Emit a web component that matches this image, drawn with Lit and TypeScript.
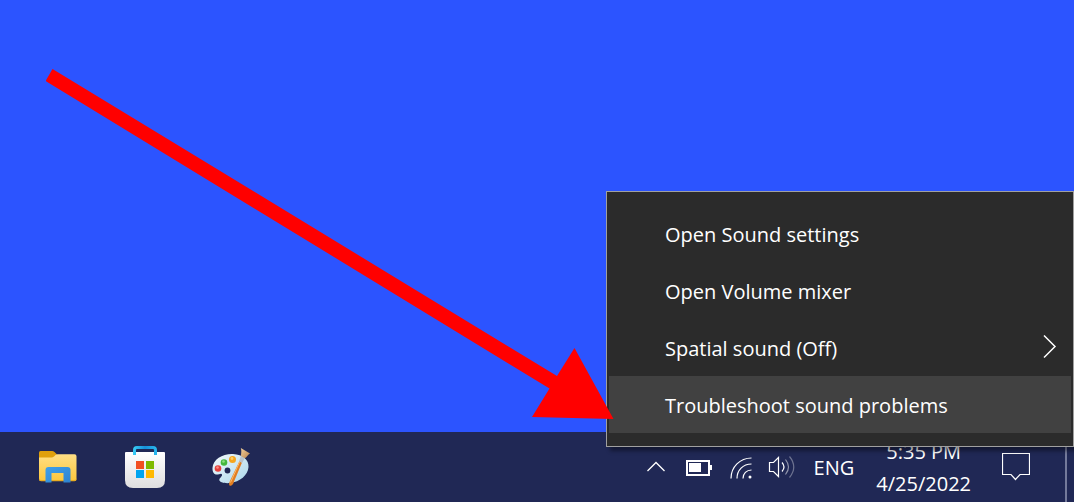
import { LitElement, html, css, svg } from "lit";
import { customElement, state } from "lit/decorators.js";
import { classMap } from "lit/directives/class-map.js";

interface MenuEntry {
  label: string;
  submenu?: boolean;
}

const ENTRIES: MenuEntry[] = [
  { label: "Open Sound settings" },
  { label: "Open Volume mixer" },
  { label: "Spatial sound (Off)", submenu: true },
  { label: "Troubleshoot sound problems" },
];

const explorerIcon = svg`
  <svg width="40" height="34" viewBox="1 0 40 34" aria-hidden="true">
    <defs>
      <linearGradient id="folder" x1="0" y1="0" x2="0" y2="1">
        <stop offset="0" stop-color="#ffdf85"/><stop offset="1" stop-color="#fcc73c"/>
      </linearGradient>
      <linearGradient id="stand" x1="0" y1="0" x2="1" y2="1">
        <stop offset="0" stop-color="#3ea0ea"/><stop offset="1" stop-color="#2f83cf"/>
      </linearGradient>
    </defs>
    <path d="M1 2.500Q1 1 2.500 1H14Q15.500 1 16.500 2L19 4.500V9H1Z" fill="#e0a00c"/>
    <path d="M1 7.500H13.500Q15 7.500 16 6.500L17.500 5Q18.300 4.300 19.500 4.300H36.500Q38.500 4.300 38.500 6.300V29Q38.500 31 36.500 31H3Q1 31 1 29Z" fill="url(#folder)"/>
    <path d="M1 28V29.500Q1 31.300 3 31.300H36.500Q38.500 31.300 38.500 29.500V28Q38.500 30 36.500 30H3Q1 30 1 28Z" fill="#e8ac22"/>
    <path d="M7.500 32.500V20Q7.500 17 10.500 17H29.500Q32.500 17 32.500 20V32.500H25.500V23H13.500V32.500Z" fill="url(#stand)"/>
  </svg>`;

const storeIcon = svg`
  <svg width="42" height="44" viewBox="0 0 42 44" aria-hidden="true">
    <defs>
      <linearGradient id="bag" x1="0" y1="0" x2="0" y2="1">
        <stop offset="0" stop-color="#ffffff"/><stop offset="1" stop-color="#dedede"/>
      </linearGradient>
      <linearGradient id="handle" x1="0" y1="0" x2="1" y2="0">
        <stop offset="0" stop-color="#35c8f4"/><stop offset="0.500" stop-color="#168fd8"/><stop offset="1" stop-color="#27b4ec"/>
      </linearGradient>
    </defs>
    <path d="M2 7H40Q41 7 41 8V35Q41 43 33 43H9Q1 43 1 35V8Q1 7 2 7Z" fill="url(#bag)"/>
    <path d="M10.500 10V5Q10.500 2.500 13 2.500H29Q31.500 2.500 31.500 5V10" fill="none" stroke="url(#handle)" stroke-width="3"/>
    <rect x="12" y="16" width="8" height="8" fill="#f25022"/>
    <rect x="22" y="16" width="8" height="8" fill="#7fba00"/>
    <rect x="12" y="25" width="8" height="8" fill="#00a4ef"/>
    <rect x="22" y="25" width="8" height="8" fill="#ffb900"/>
  </svg>`;

const paintIcon = svg`
  <svg width="40" height="40" viewBox="0 0 40 40" aria-hidden="true">
    <defs>
      <linearGradient id="palette" x1="0" y1="0" x2="1" y2="1">
        <stop offset="0" stop-color="#f4fafc"/><stop offset="1" stop-color="#a9d6ea"/>
      </linearGradient>
      <linearGradient id="bristle" x1="0" y1="0" x2="1" y2="1">
        <stop offset="0" stop-color="#f2d09c"/><stop offset="1" stop-color="#b9824c"/>
      </linearGradient>
    </defs>
    <path d="M1.500 21C2 12 12 6.500 22 7C32 7.500 38 13 37.500 20C37 28 29 35 19 36C14 36.500 8.500 35.500 8.300 33C8.200 31 11.500 29.500 11 27.500C10.500 25.500 7.500 28 5 27.500C2.500 27 1.300 24 1.500 21Z" fill="url(#palette)"/>
    <circle cx="16.500" cy="23.500" r="2.900" fill="#202855"/>
    <circle cx="7" cy="21.500" r="3.300" fill="#e5413c"/><circle cx="6.500" cy="20.500" r="1.300" fill="#ff8c80"/>
    <circle cx="13" cy="15.500" r="3.300" fill="#45b83d"/><circle cx="12.500" cy="14.500" r="1.300" fill="#8ee07f"/>
    <circle cx="21.500" cy="12.500" r="3.500" fill="#f6a51d"/><circle cx="21" cy="11.500" r="1.400" fill="#ffd069"/>
    <path d="M28.500 14L31 15.500L22 37Q20.500 39.500 18.500 38.500Q17.500 37.500 18.500 35Z" fill="#e17d20"/>
    <path d="M28.800 14.500L19.500 35.500" stroke="#ffbb69" stroke-width="1" fill="none"/>
    <path d="M30 8.500L34 11L31 16L28 14.300Z" fill="#b8c3cc"/>
    <path d="M29.800 1L39 6.500Q37.500 7.200 36.500 8.700Q35.300 10.500 33.800 11.200L30 9Q30 7.500 30.300 5Q30.500 3 29.800 1Z" fill="url(#bristle)"/>
  </svg>`;

const chevronUpIcon = svg`
  <svg width="20" height="14" viewBox="0 0 20 14" aria-hidden="true">
    <path d="M1.500 10L10 1.500L18.500 10" fill="none" stroke="#fff" stroke-width="1.300"/>
  </svg>`;

const batteryIcon = svg`
  <svg width="26" height="16" viewBox="0 0 26 16" aria-hidden="true">
    <rect x="1" y="1" width="22" height="14" fill="none" stroke="#fff" stroke-width="2"/>
    <rect x="3" y="3" width="12" height="9" fill="#fff"/>
    <rect x="24" y="5" width="2" height="5" fill="#fff"/>
  </svg>`;

const wifiIcon = svg`
  <svg width="22" height="22" viewBox="0 0 22 22" fill="none" stroke="#fff" stroke-width="1.200" aria-hidden="true">
    <path d="M1 21.500C1 10 10 1 21.500 1"/>
    <path d="M7 21.500C7 13 13 7 21.500 7"/>
    <path d="M13 21.500C13 16.500 16.500 13 21.500 13" />
    <circle cx="20" cy="20" r="1.500" fill="#fff" stroke="none"/>
  </svg>`;

const volumeIcon = svg`
  <svg width="28" height="24" viewBox="0 0 28 24" fill="none" stroke="#fff" stroke-width="1.200" aria-hidden="true">
    <path d="M1.500 6.500H5.500L10.500 1.500V20.500L5.500 15.500H1.500Z"/>
    <path d="M14 6.500Q18 11 14 15.500"/>
    <path d="M17.500 3.500Q23.500 11 17.500 18.500" opacity="0.500"/>
    <path d="M21.500 0.500Q30 11 21.500 21.500" opacity="0.350"/>
  </svg>`;

const notificationIcon = svg`
  <svg width="28" height="30" viewBox="0 0 28 30" aria-hidden="true">
    <path d="M0.500 0.500H27.500V21.500H18L13.500 26.500L9 21.500H0.500Z" fill="none" stroke="#fff" stroke-width="1.200"/>
  </svg>`;

const chevronRightIcon = svg`
  <svg width="14" height="28" viewBox="0 0 14 28" aria-hidden="true">
    <path d="M1 0.500L12 11.500L1 22.500" fill="none" stroke="#fff" stroke-width="1.500"/>
  </svg>`;

@customElement("volume-menu")
export class VolumeMenu extends LitElement {
  @state() private active = 3;

  static styles = css`
    :host {
      display: block;
      box-sizing: border-box;
      padding: 13px 2px;
      background: #2b2b2b;
      border: 1px solid #a0a0a0;
      box-shadow: 4px 4px 4px rgba(0, 0, 0, 0.4);
    }
    .item {
      display: flex;
      align-items: center;
      justify-content: space-between;
      width: 100%;
      height: 57px;
      padding: 3px 14px 0 56px;
      border: 0;
      background: none;
      color: #fff;
      font: inherit;
      text-align: left;
    }
    .active {
      background: #414141;
    }
  `;

  render() {
    return html`${ENTRIES.map(
      (entry, i) => html`<button
        role="menuitem"
        class=${classMap({ item: true, active: i === this.active })}
        @mouseenter=${() => (this.active = i)}
      >
        <span>${entry.label}</span>${entry.submenu ? chevronRightIcon : ""}
      </button>`
    )}`;
  }
}

@customElement("app-root")
export class AppRoot extends LitElement {
  static styles = css`
    :host {
      display: flex;
      flex-direction: column;
      position: relative;
      height: 100vh;
      overflow: hidden;
      background: #2c54ff;
      color: #fff;
      font-family: "Open Sans", "Noto Sans", sans-serif;
      font-size: 20px;
      line-height: 32px;
    }
    .desktop {
      flex: 1;
    }
    .taskbar {
      display: flex;
      justify-content: space-between;
      height: 70px;
      background: #202855;
    }
    button {
      display: flex;
      align-items: center;
      justify-content: center;
      padding: 0;
      border: 0;
      background: none;
      color: inherit;
      font: inherit;
    }
    svg {
      display: block;
    }
    .apps,
    .tray {
      display: flex;
    }
    .apps {
      padding-left: 16px;
    }
    .apps button {
      width: 86px;
    }
    .tray button {
      padding: 2px 8px 0;
    }
    .tray .wide {
      padding: 2px 10px 0;
    }
    .tray .clock {
      flex-direction: column;
      padding: 2px 12px 0;
    }
    .tray .notify {
      padding: 2px 35px 0 19px;
    }
    .tray .show-desktop {
      width: 9px;
      padding: 0;
      border-left: 2px solid #747a9b;
    }
    volume-menu {
      position: absolute;
      right: 0;
      bottom: 55px;
      width: 468px;
    }
    .arrow {
      position: absolute;
      left: 46px;
      top: 69px;
      pointer-events: none;
    }
  `;

  render() {
    return html`
      <main class="desktop"></main>
      <footer class="taskbar">
        <nav class="apps">
          <button aria-label="File Explorer">${explorerIcon}</button>
          <button aria-label="Microsoft Store">${storeIcon}</button>
          <button aria-label="Paint">${paintIcon}</button>
        </nav>
        <div class="tray">
          <button class="wide" aria-label="Show hidden icons">${chevronUpIcon}</button>
          <button class="wide" aria-label="Battery">${batteryIcon}</button>
          <button aria-label="Network">${wifiIcon}</button>
          <button aria-label="Volume">${volumeIcon}</button>
          <button class="wide">ENG</button>
          <button class="clock"><span>5:35 PM</span><span>4/25/2022</span></button>
          <button class="notify" aria-label="Notifications">${notificationIcon}</button>
          <button class="show-desktop" aria-label="Show desktop"></button>
        </div>
      </footer>
      <volume-menu role="menu"></volume-menu>
      <svg class="arrow" width="568" height="352" viewBox="46 69 568 352" aria-hidden="true">
        <path d="M52.500 69L557 376L574.500 348L613.500 419L532 417L549.500 388.500L45.500 81Z" fill="#f00"/>
      </svg>
    `;
  }
}
